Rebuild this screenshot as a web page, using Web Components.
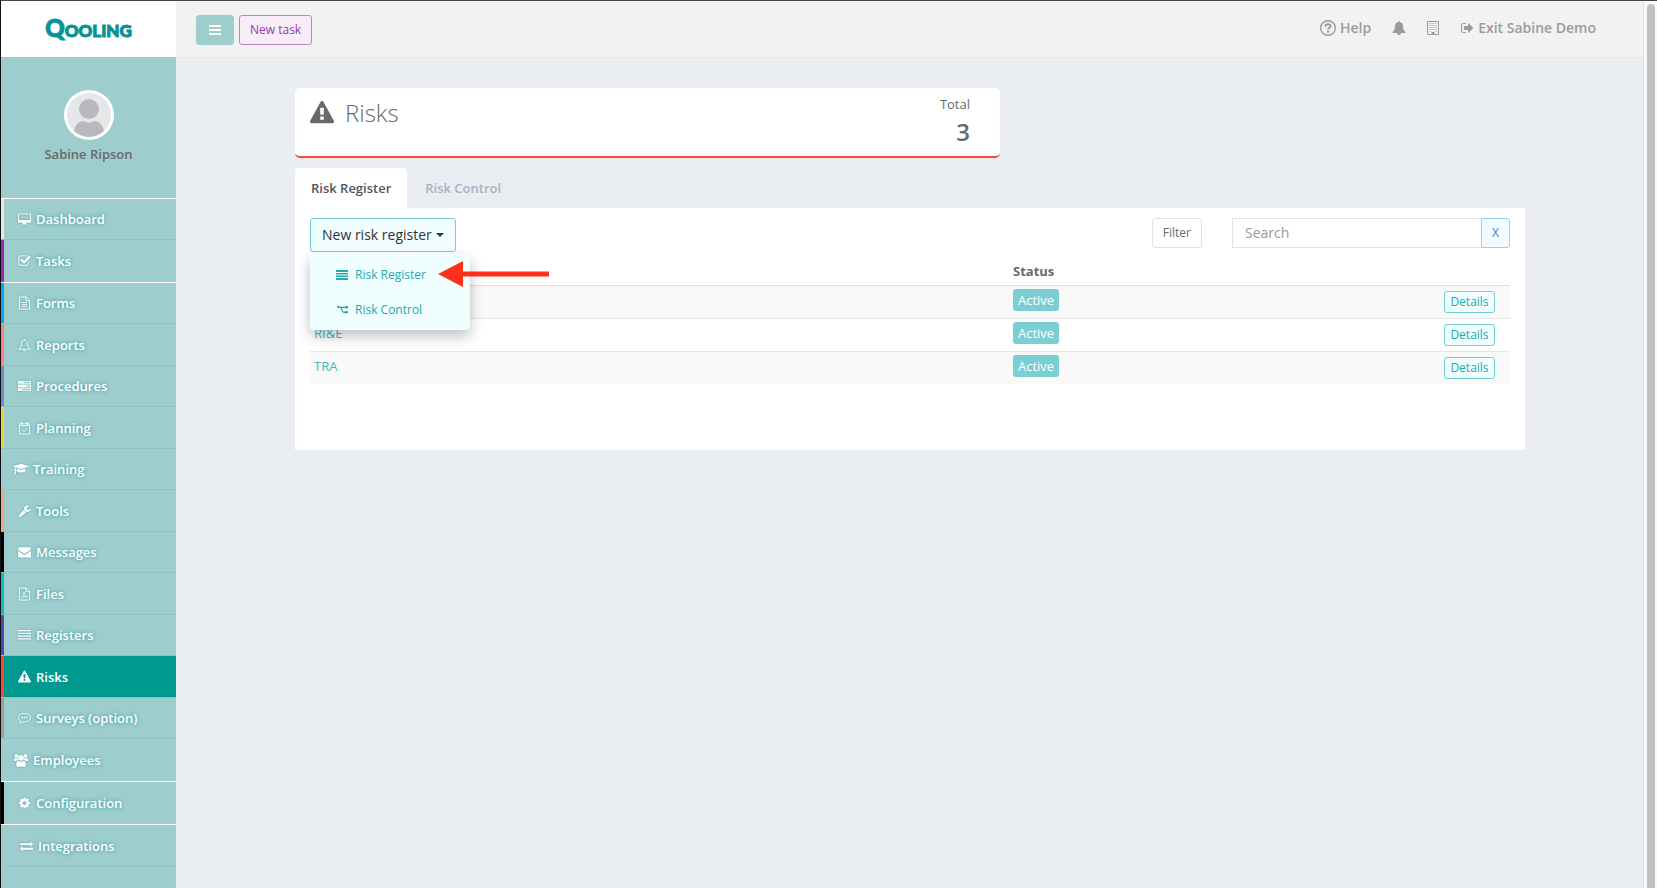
<!DOCTYPE html>
<html lang="en">
<head>
<meta charset="utf-8">
<meta name="viewport" content="width=device-width, initial-scale=1">
<title>Risks - Qooling</title>
<style>
  body {
    margin: 0;
    font-family: "Open Sans", "Noto Sans", sans-serif;
    font-size: 13px;
    color: #676a6c;
    background: #eaeef3;
  }
</style>
</head>
<body>

<qooling-app>
  <qooling-sidebar slot="sidebar" user="Sabine Ripson"></qooling-sidebar>
  <qooling-topbar slot="topbar"></qooling-topbar>
  <stat-card icon="warning" total="3">Risks</stat-card>
  <risk-panel></risk-panel>
</qooling-app>

<script>
'use strict';
(
  function () {

    const bar = (y) => `M0 ${y}h14v1.4h-14z`;

    // name: [viewBox, markup]
    const icons = {
      bars: ['0 0 12 10', '<path d="M0 0h12v2H0zM0 4h12v2H0zM0 8h12v2H0z"/>'],
      desktop: ['0 0 14 14', '<path fill-rule="evenodd" d="M1 1h12a1 1 0 0 1 1 1v8a1 1 0 0 1-1 1H9v1.200l1 .6V13H4v-.6l1-.2V11H1a1 1 0 0 1-1-1V2a1 1 0 0 1 1-1zm0 1v6h12V2z"/>'],
      check: ['0 0 1792 1792', '<path d="M1472 930v318q0 119-84.5 203.5t-203.5 84.5h-832q-119 0-203.5-84.5t-84.5-203.5v-832q0-119 84.5-203.5t203.5-84.5h832q63 0 117 25 15 7 18 23 3 17-9 29l-49 49q-10 10-23 10-3 0-9-2-23-6-45-6h-832q-66 0-113 47t-47 113v832q0 66 47 113t113 47h832q66 0 113-47t47-113v-254q0-13 9-22l64-64q10-10 23-10 6 0 12 3 20 8 20 29zm231-489l-814 814q-24 24-57 24t-57-24l-430-430q-24-24-24-57t24-57l110-110q24-24 57-24t57 24l263 263 647-647q24-24 57-24t57 24l110 110q24 24 24 57t-24 57z"/>'],
      file: ['0 0 14 14', '<path fill="none" stroke="currentColor" d="M1.500.5h7.500l3.500 3.500v9.500h-11zM8.500.5v4h4M4 6.500h6M4 8.500h6M4 10.500h6"/>'],
      pdf: ['0 0 14 14', '<path fill="none" stroke="currentColor" d="M1.500.5h7.500l3.500 3.500v9.500h-11zM8.500.5v4h4"/><path fill="none" stroke="currentColor" stroke-width=".8" d="M3.500 11.500c2-1 3.500-4 3-6.500 0 3 2 5 4 5-2-.5-4 0-6 .8"/>'],
      bellOutline: ['0 0 14 14', '<path fill="none" stroke="currentColor" d="M7 .5v1C4.500 1.700 3.700 3.900 3.700 5.800c0 2.700-.9 4.200-2.900 5.700h12.400c-2-1.500-2.900-3-2.900-5.700C10.300 3.900 9.500 1.700 7 1.500M5.700 12a1.300 1.300 0 0 0 2.600 0"/>'],
      bell: ['0 0 1792 1792', '<path d="M1728 1408q0 52-38 90t-90 38h-448q0 106-75 181t-181 75-181-75-75-181h-448q-52 0-90-38t-38-90q50-42 91-88t85-119.500 74.500-158.500 50-206 19.500-260q0-152 117-282.500t307-158.500q-8-19-8-39 0-40 28-68t68-28 68 28 28 68q0 20-8 39 190 28 307 158.500t117 282.500q0 139 19.500 260t50 206 74.500 158.500 85 119.500 91 88z"/>'],
      server: ['0 0 14 14', '<path fill-rule="evenodd" d="M0 1.500h14v3H0zm6 1v1h7v-1zM0 5.500h14v3H0zm9 1v1h4v-1zM0 9.500h14v3H0zm4 1v1h9v-1z"/>'],
      calendar: ['0 0 14 14', '<path fill="none" stroke="currentColor" d="M1.500 2.500h11v11h-11zM1.500 4.500h11M4.500 9l2 2 3.500-4"/><path fill="none" stroke="currentColor" stroke-width="2" d="M4 .5v3M10 .5v3"/>'],
      cap: ['0 0 2304 1792', '<path d="M1774 836l18 316q4 69-82 128t-235 93.500-323 34.500-323-34.500-235-93.500-82-128l18-316 574 181q22 7 48 7t48-7zm530-324q0 23-22 31l-1120 352q-4 1-10 1t-10-1l-652-206q-43 34-71 111.500t-34 178.500q63 36 63 109 0 69-58 107l58 433q2 14-8 25-9 11-24 11h-192q-15 0-24-11-10-11-8-25l58-433q-58-38-58-107 0-73 65-111 11-207 98-330l-333-104q-22-8-22-31t22-31l1120-352q4-1 10-1t10 1l1120 352q22 8 22 31z"/>'],
      wrench: ['0 0 1792 1792', '<path d="M448 1472q0-26-19-45t-45-19-45 19-19 45 19 45 45 19 45-19 19-45zm644-420l-682 682q-37 37-90 37-52 0-91-37l-106-108q-38-36-38-90 0-53 38-91l681-681q39 98 114.500 173.500t173.500 114.500zm634-435q0 39-23 106-47 134-164.500 217.500t-258.500 83.500q-185 0-316.500-131.500t-131.500-316.500 131.500-316.500 316.500-131.500q58 0 121.500 16.500t107.500 46.500q16 11 16 28t-16 28l-293 169v224l193 107q5-3 79-48.500t135.500-81 70.500-35.500q15 0 23.500 10t8.500 25z"/>'],
      envelope: ['0 0 1792 1792', '<path d="M1792 710v794q0 66-47 113t-113 47h-1472q-66 0-113-47t-47-113v-794q44 49 101 87 362 246 497 345 57 42 92.500 65.500t94.500 48 110 24.500h2q51 0 110-24.500t94.500-48 92.500-65.500q170-123 498-345 57-39 100-87zm0-294q0 79-49 151t-122 123q-376 261-468 325-10 7-42.500 31t-54 38.500-52 32.500-57.500 27-50 9h-2q-23 0-50-9t-57.500-27-52-32.500-54-38.500-42.500-31q-91-64-262-182.500t-205-142.500q-62-42-117-115.500t-55-136.500q0-78 41.500-130t118.500-52h1472q65 0 112.500 47t47.500 113z"/>'],
      list: ['0 0 14 14', `<path d="${bar(1.5)}${bar(4.5)}${bar(7.5)}${bar(10.5)}"/>`],
      listBold: ['0 0 12 10', '<path d="M0 0h12v2H0zM0 3h12v1.500H0zM0 5.500h12v1.500H0zM0 8h12v2H0z"/>'],
      warning: ['0 0 1792 1792', '<path d="M1024 1375v-190q0-14-9.500-23.500t-22.500-9.500h-192q-13 0-22.500 9.500t-9.500 23.500v190q0 14 9.500 23.500t22.500 9.500h192q13 0 22.500-9.500t9.500-23.500zm-2-374l18-459q0-12-10-19-13-11-24-11h-220q-11 0-24 11-10 7-10 21l17 457q0 10 10 16.500t24 6.500h185q14 0 23.500-6.500t10.500-16.500zm-14-934l768 1408q35 63-2 126-17 29-46.500 46t-63.500 17h-1536q-34 0-63.500-17t-46.500-46q-37-63-2-126l768-1408q17-31 47-49t65-18 65 18 47 49z"/>'],
      comment: ['0 0 14 14', '<path fill="none" stroke="currentColor" d="M7 2c3.700 0 6.500 1.900 6.500 4.500S10.700 11 7 11c-.6 0-1.100 0-1.600-.1-1.100 1-2.200 1.500-3.600 1.700.7-.7 1-1.300 1.100-2.300C1.400 9.500.5 8.100.5 6.500.5 3.900 3.300 2 7 2z"/><path d="M3.500 5.700h1.600v1.600H3.500zM6.200 5.700h1.600v1.600H6.200zM8.900 5.700h1.600v1.600H8.900z"/>'],
      users: ['0 0 16 16', '<g transform="translate(0 1)"><circle cx="3.500" cy="3" r="1.900"/><circle cx="12.500" cy="3" r="1.900"/><circle cx="8" cy="4.800" r="2.900"/><path d="M1 7.500C1 6 1.500 5 2.300 5c.8.6 1.700.6 2.500.3C4.900 6 5.200 6.800 5.600 7.300H4.500C3.800 7.300 3.300 8 3 8H1.800C1.300 8 1 7.800 1 7.500zM15 7.500C15 6 14.500 5 13.700 5c-.8.6-1.700.6-2.500.3-.1.700-.4 1.500-.8 2h1.100c.7 0 1.200.7 1.500.7h1.200c.5 0 .8-.2.8-.5zM5 7.700c1.700 1.300 4.300 1.300 6 0 1.200.3 1.800 2 1.800 3.800 0 1.400-.7 2.300-1.800 2.300H5c-1.100 0-1.800-.9-1.800-2.300C3.200 9.700 3.800 8 5 7.700z"/></g>'],
      cog: ['0 0 1792 1792', '<path d="M1152 896q0-106-75-181t-181-75-181 75-75 181 75 181 181 75 181-75 75-181zm512-109v222q0 12-8 23t-20 13l-185 28q-19 54-39 91 35 50 107 138 10 12 10 25t-9 23q-27 37-99 108t-94 71q-12 0-26-9l-138-108q-44 23-91 38-16 136-29 186-7 28-36 28h-222q-14 0-24.500-8.500t-11.500-21.500l-28-184q-49-16-90-37l-141 107q-10 9-25 9-14 0-25-11-126-114-165-168-7-10-7-23 0-12 8-23 15-21 51-66.500t54-70.500q-27-50-41-99l-183-27q-13-2-21-12.500t-8-23.500v-222q0-12 8-23t19-13l186-28q14-46 39-92-40-57-107-138-10-12-10-24 0-10 9-23 26-36 98.500-107.500t94.500-71.500q13 0 26 10l138 107q44-23 91-38 16-136 29-186 7-28 36-28h222q14 0 24.500 8.500t11.500 21.500l28 184q49 16 90 37l142-107q9-9 24-9 13 0 25 10 129 119 165 170 7 8 7 22 0 12-8 23-15 21-51 66.500t-54 70.500q26 50 41 98l183 28q13 2 21 12.500t8 23.500z"/>'],
      exchange: ['0 0 1792 1792', '<path d="M1792 1184v192q0 13-9.500 22.500t-22.500 9.500h-1376v192q0 13-9.500 22.500t-22.500 9.500q-12 0-24-10l-319-320q-9-9-9-22 0-14 9-23l320-320q9-9 23-9 13 0 22.500 9.500t9.500 22.500v192h1376q13 0 22.500 9.500t9.500 22.500zm0-544q0 14-9 23l-320 320q-9 9-23 9-13 0-22.500-9.500t-9.500-22.500v-192h-1376q-13 0-22.500-9.500t-9.500-22.500v-192q0-13 9.500-22.500t22.500-9.500h1376v-192q0-14 9-23t23-9q12 0 24 10l319 319q9 9 9 23z"/>'],
      help: ['0 0 16 16', '<circle cx="8" cy="8" r="7.300" fill="none" stroke="currentColor" stroke-width="1.400"/><path fill="none" stroke="currentColor" stroke-width="2" d="M5.500 6.500C5.500 5 6.500 4.300 8 4.300s2.500.8 2.500 2.100C10.500 8 8.100 7.900 8.100 9.600"/><path d="M7 10.500h2.200v2H7z"/>'],
      building: ['0 0 12 14', '<path fill="none" stroke="currentColor" d="M.5.500h11v13H.5z"/><path fill="none" stroke="currentColor" stroke-dasharray="1 1" d="M2.500 2.500h7M2.500 4.500h7M2.500 6.500h7M2.500 8.500h7M2.500 10.500h2M8.500 10.500h2"/><path d="M4.500 11h3v3h-3z"/>'],
      signout: ['0 0 1664 1792', '<path d="M704 1440q0 4 1 20t.5 26.500-3 23.500-10 19.500-20.500 6.500h-320q-119 0-203.500-84.500t-84.500-203.500v-704q0-119 84.500-203.500t203.500-84.500h320q13 0 22.500 9.500t9.500 22.500q0 4 1 20t.5 26.500-3 23.500-10 19.500-20.500 6.500h-320q-66 0-113 47t-47 113v704q0 66 47 113t113 47h312l11.500 1 11.500 3 8 5.500 7 9 2 13.500zm928-544q0 26-19 45l-544 544q-19 19-45 19t-45-19-19-45v-288h-448q-26 0-45-19t-19-45v-384q0-26 19-45t45-19h448v-288q0-26 19-45t45-19 45 19l544 544q19 19 19 45z"/>'],
      branch: ['0 0 12 10', '<path fill="none" stroke="currentColor" stroke-width="1.200" d="M1.500 2.300h9M4.500 2.300c1.500 0 1 5 3.500 5h3"/><path d="M1 1h2.500v1H1zM9.500 1H12v2.500H9.500zM8.500 6.300H12v2H8.500z"/>']
    };

    class QIcon extends HTMLElement {
      constructor() {
        super();
        this.attachShadow({ mode: 'open' });
      }

      connectedCallback() {
        const [box, markup] = icons[this.getAttribute('name')];
        this.shadowRoot.innerHTML = `
        <style>
          :host {
            display: inline-block;
            width: 14px;
            height: 14px;
            flex: none;
          }

          svg {
            display: block;
            width: 100%;
            height: 100%;
            fill: currentColor;
          }
        </style>
        <svg viewBox="${box}" aria-hidden="true">${markup}</svg>
      `;
      }
    }

    class QoolingApp extends HTMLElement {
      constructor() {
        super();
        this.attachShadow({ mode: 'open' }).innerHTML = `
        <style>
          :host {
            display: grid;
            grid-template-columns: 175px minmax(0, 1fr) 14px;
            min-height: 100vh;
            box-sizing: border-box;
            border-top: 1px solid #444246;
            border-left: 1px solid #111;
          }

          .page {
            display: flex;
            flex-direction: column;
          }

          main {
            display: flex;
            flex-direction: column;
            gap: 10px;
            padding: 30px 118px 30px 119px;
          }

          .scroll {
            box-sizing: border-box;
            padding: 3px 2px 0 3px;
            border-left: 1px solid #e4e4e6;
            background: #fafafa;
            display: flex;
          }

          .thumb {
            flex: 1;
            border-radius: 4px 4px 0 0;
            background: #c1c1c1;
          }
        </style>
        <slot name="sidebar"></slot>
        <div class="page">
          <slot name="topbar"></slot>
          <main><slot></slot></main>
        </div>
        <div class="scroll"><div class="thumb"></div></div>
      `;
      }
    }

    class QoolingSidebar extends HTMLElement {
      constructor() {
        super();
        const shadow = this.attachShadow({ mode: 'open' });

        // label, icon, stripe colour, extra classes
        const items = [
          ['Dashboard', 'desktop', '#e4e8ea'],
          ['Tasks', 'check', '#9c27b0', 'divider'],
          ['Forms', 'file', '#03a9f4'],
          ['Reports', 'bellOutline', '#ff8080'],
          ['Procedures', 'server', '#6a8fc8'],
          ['Planning', 'calendar', '#edd534'],
          ['Training', 'cap', '', 'flush'],
          ['Tools', 'wrench', '#f4a878'],
          ['Messages', 'envelope', '#000'],
          ['Files', 'pdf', '#00bcd4'],
          ['Registers', 'list', '#4a4ab4'],
          ['Risks', 'warning', '#ff4436', 'active'],
          ['Surveys (option)', 'comment', '#9e9e9e'],
          ['Employees', 'users', '', 'flush divider'],
          ['Configuration', 'cog', '#000', 'divider'],
          ['Integrations', 'exchange', '', 'inset']
        ];

        shadow.innerHTML = `
        <style>
          :host {
            display: block;
            background: #9ecdce;
          }

          .logo {
            display: flex;
            align-items: center;
            justify-content: center;
            height: 56px;
            background: #fff;
            color: #0a9296;
            font: 900 17px/24px Lato, "Open Sans", sans-serif;
            text-decoration: none;
            -webkit-text-stroke: 1px #0a9296;
          }

          .logo span {
            font-size: 24px;
          }

          .profile {
            display: flex;
            flex-direction: column;
            align-items: center;
            gap: 5px;
            height: 108px;
            padding-top: 33px;
            border-bottom: 1px solid #fff;
            font-weight: 600;
            line-height: 18px;
          }

          .avatar {
            display: block;
            width: 50px;
            height: 50px;
          }

          ul {
            list-style: none;
            margin: 0;
            padding: 0;
          }

          li {
            display: flex;
            box-sizing: border-box;
            height: 42px;
            border-bottom: 1px solid #8cc3c5;
          }

          li:nth-child(odd) {
            height: 41px;
          }

          li.divider {
            height: 43px;
            border-bottom-color: #fff;
          }

          li a {
            flex: 1;
            display: flex;
            align-items: center;
            gap: 5px;
            padding-left: 14px;
            border-left: 3px solid var(--stripe);
            color: #fff;
            font-weight: 600;
            text-decoration: none;
            text-shadow: 0 0 4px #2b9396;
          }

          q-icon {
            width: 13px;
            filter: drop-shadow(0 0 1px #4ba5a7);
          }

          .flush a {
            gap: 4px;
            padding-left: 12px;
            border-left: 0;
          }

          .flush q-icon {
            width: 16px;
            height: 16px;
          }

          .inset {
            margin-left: 5px;
          }

          .inset a {
            border-left: 0;
          }

          .active a {
            background: #009990;
            text-shadow: none;
          }

          .active q-icon {
            filter: none;
          }
        </style>
        <a class="logo" href="#"><div><span>Q</span>OOLING</div></a>
        <div class="profile">
          <svg class="avatar" viewBox="0 0 50 50" aria-hidden="true">
            <clipPath id="face"><circle cx="25" cy="25" r="22"/></clipPath>
            <circle cx="25" cy="25" r="25" fill="#fff"/>
            <circle cx="25" cy="25" r="22" fill="#e6e7e9"/>
            <g clip-path="url(#face)" fill="#b8b9bf">
              <path d="M10 50V43c0-8 5-12 10-12 3 2 7 2 10 0 5 0 10 4 10 12v7z"/>
              <circle cx="25" cy="19" r="10"/>
            </g>
          </svg>
          <div>${this.user}</div>
        </div>
        <nav>
          <ul>
            ${items.map(([label, icon, stripe, cls]) => `
            <li class="${cls || ''}" style="--stripe: ${stripe || 'transparent'}">
              <a href="#"><q-icon name="${icon}"></q-icon>${label}</a>
            </li>`).join('')}
          </ul>
        </nav>
      `;
      }

      get user() {
        return this.getAttribute('user') || '';
      }
    }

    class QoolingTopbar extends HTMLElement {
      constructor() {
        super();
        this.attachShadow({ mode: 'open' }).innerHTML = `
        <style>
          :host {
            display: flex;
            align-items: flex-start;
            gap: 5px;
            box-sizing: border-box;
            height: 57px;
            padding: 14px 47px 0 20px;
            border-bottom: 1px solid #e5e6e8;
            background: #f2f2f2;
          }

          button {
            height: 30px;
            border: 1px solid #bb85c5;
            border-radius: 3px;
            padding: 0 10px;
            background: #f7edf8;
            color: #9b35b0;
            font: 12px/18px "Open Sans", sans-serif;
          }

          .toggle {
            width: 38px;
            padding: 0 12px;
            border-color: #9ecdce;
            background: #9ecdce;
            color: #fff;
          }

          .toggle q-icon {
            display: block;
            width: 12px;
            height: 10px;
          }

          nav {
            display: flex;
            align-items: center;
            gap: 21px;
            height: 26px;
            margin-left: auto;
          }

          a {
            display: flex;
            align-items: center;
            gap: 4px;
            color: #999c9e;
            font-size: 14px;
            font-weight: 600;
            line-height: 20px;
            text-decoration: none;
          }

          .help q-icon {
            width: 16px;
            height: 16px;
          }

          .company q-icon {
            width: 12px;
          }
        </style>
        <button class="toggle" aria-label="Toggle menu"><q-icon name="bars"></q-icon></button>
        <button>New task</button>
        <nav>
          <a class="help" href="#"><q-icon name="help"></q-icon>Help</a>
          <a href="#" aria-label="Notifications"><q-icon name="bell"></q-icon></a>
          <a class="company" href="#" aria-label="Company"><q-icon name="building"></q-icon></a>
          <a href="#"><q-icon name="signout"></q-icon>Exit Sabine Demo</a>
        </nav>
      `;
      }
    }

    class StatCard extends HTMLElement {
      constructor() {
        super();
        this.attachShadow({ mode: 'open' }).innerHTML = `
        <style>
          :host {
            display: grid;
            grid-template-columns: repeat(12, minmax(0, 1fr));
            column-gap: 30px;
          }

          .card {
            grid-column: span 7;
            display: flex;
            justify-content: space-between;
            box-sizing: border-box;
            height: 70px;
            padding: 7px 30px 0 15px;
            border-bottom: 2px solid #f9483b;
            border-radius: 5px;
            background: #fff;
          }

          h1 {
            display: flex;
            align-items: center;
            gap: 11px;
            margin: 0;
            height: 36px;
            font-size: 24px;
            font-weight: 300;
            line-height: 36px;
          }

          h1 q-icon {
            width: 24px;
            height: 24px;
          }

          .total {
            text-align: right;
            line-height: 18px;
          }

          strong {
            display: block;
            font-size: 24px;
            font-weight: 600;
            line-height: 38px;
          }
        </style>
        <div class="card">
          <h1><q-icon name="${this.getAttribute('icon')}"></q-icon><slot></slot></h1>
          <div class="total">Total <strong>${this.getAttribute('total')}</strong></div>
        </div>
      `;
      }
    }

    class NewRiskMenu extends HTMLElement {
      constructor() {
        super();
        this.attachShadow({ mode: 'open' }).innerHTML = `
        <style>
          :host {
            display: block;
            position: relative;
          }

          button {
            display: flex;
            align-items: center;
            gap: 4px;
            height: 34px;
            padding: 0 11px;
            border: 1px solid #72cdd0;
            border-radius: 3px;
            background: #f0feff;
            color: #333;
            font: 14px/20px "Open Sans", sans-serif;
          }

          .caret {
            border: 4px solid transparent;
            border-top-color: currentColor;
            border-bottom: 0;
          }

          ul {
            position: absolute;
            top: 36px;
            left: 0;
            z-index: 1;
            box-sizing: border-box;
            width: 160px;
            margin: 0;
            padding: 3px 0;
            list-style: none;
            border-radius: 3px;
            background: #f0feff;
            box-shadow: 0 6px 14px rgba(0, 0, 0, .25);
          }

          a {
            display: flex;
            align-items: center;
            gap: 7px;
            height: 35px;
            padding-left: 26px;
            color: #23a9b0;
            font-size: 12px;
            text-decoration: none;
          }

          q-icon {
            width: 12px;
            height: 10px;
          }

          .arrow {
            position: absolute;
            top: 43px;
            left: 128px;
            z-index: 2;
            width: 111px;
            height: 26px;
            fill: #ff3019;
          }
        </style>
        <button aria-haspopup="true" aria-expanded="true">New risk register<span class="caret"></span></button>
        <ul>
          <li><a href="#"><q-icon name="listBold"></q-icon>Risk Register</a></li>
          <li><a href="#"><q-icon name="branch"></q-icon>Risk Control</a></li>
        </ul>
        <svg class="arrow" viewBox="0 0 111 26" aria-hidden="true"><path d="M0 13 25 0v10.500h86v5H25V26z"/></svg>
      `;
      }
    }

    class RiskPanel extends HTMLElement {
      constructor() {
        super();
        const rows = ['', 'RI&amp;E', 'TRA'];

        this.attachShadow({ mode: 'open' }).innerHTML = `
        <style>
          :host {
            display: block;
          }

          button, input {
            box-sizing: border-box;
            height: 30px;
            border: 1px solid #e2e2e2;
            font: 12px/18px "Open Sans", sans-serif;
          }

          .tabs {
            display: flex;
            gap: 2px;
          }

          .tabs button {
            height: 40px;
            padding: 0 16px;
            border: 0;
            border-radius: 4px 4px 0 0;
            background: none;
            color: #a7b1c2;
            font-size: 13px;
            font-weight: 600;
          }

          .tabs button[aria-selected=true] {
            background: #fff;
            color: #555;
          }

          .panel {
            box-sizing: border-box;
            min-height: 242px;
            padding: 10px 15px;
            background: #fff;
          }

          .toolbar {
            display: flex;
            align-items: flex-start;
          }

          .filter {
            margin: 0 30px 0 auto;
            padding: 0 10px;
            border-radius: 3px;
            background: #fff;
            color: #676a6c;
          }

          input {
            width: 249px;
            padding: 0 12px 2px;
            border-right: 0;
            border-radius: 1px 0 0 1px;
            font-size: 14px;
          }

          input::placeholder {
            color: #999;
          }

          .clear {
            width: 29px;
            padding: 0;
            border-color: #8fd3f0;
            border-radius: 0 3px 3px 0;
            background: #f2fbff;
            color: #3c86cc;
          }

          table {
            width: 100%;
            table-layout: fixed;
            border-collapse: collapse;
          }

          .name {
            width: 699px;
          }

          .action {
            width: 150px;
          }

          th, td {
            padding: 0 4px;
            text-align: left;
          }

          th {
            height: 33px;
            padding-top: 6px;
            box-sizing: border-box;
            border-bottom: 1px solid #ddd;
            font-weight: 700;
            line-height: 18px;
          }

          td {
            box-sizing: border-box;
            height: 33px;
            padding-bottom: 4px;
            border-top: 1px solid #e7e7e7;
          }

          tbody tr:nth-child(odd) {
            background: #f9f9f9;
          }

          td a {
            color: #3cbcc0;
            text-decoration: none;
          }

          .badge {
            display: block;
            width: max-content;
            padding: 0 5px;
            border-radius: 3px;
            background: #7bcfd4;
            color: #fff;
            line-height: 22px;
          }

          td:last-child {
            padding: 0 15px 0 0;
          }

          .details {
            display: block;
            width: 51px;
            height: 22px;
            margin-left: auto;
            padding: 0;
            border-color: #72cdd0;
            border-radius: 3px;
            background: #f0feff;
            color: #23a9b0;
          }
        </style>
        <div class="tabs" role="tablist">
          <button role="tab" aria-selected="true">Risk Register</button>
          <button role="tab" aria-selected="false">Risk Control</button>
        </div>
        <div class="panel">
          <div class="toolbar">
            <new-risk-menu></new-risk-menu>
            <button class="filter">Filter</button>
            <input type="text" placeholder="Search" aria-label="Search">
            <button class="clear">X</button>
          </div>
          <table>
            <colgroup><col class="name"><col><col class="action"></colgroup>
            <thead>
              <tr><th></th><th>Status</th><th></th></tr>
            </thead>
            <tbody>
              ${rows.map((name) => `
              <tr>
                <td>${name ? `<a href="#">${name}</a>` : ''}</td>
                <td><span class="badge">Active</span></td>
                <td><button class="details">Details</button></td>
              </tr>`).join('')}
            </tbody>
          </table>
        </div>
      `;
      }
    }

    customElements.define('q-icon', QIcon);
    customElements.define('new-risk-menu', NewRiskMenu);
    customElements.define('risk-panel', RiskPanel);
    customElements.define('stat-card', StatCard);
    customElements.define('qooling-topbar', QoolingTopbar);
    customElements.define('qooling-sidebar', QoolingSidebar);
    customElements.define('qooling-app', QoolingApp);
  })();
</script>
</body>
</html>
